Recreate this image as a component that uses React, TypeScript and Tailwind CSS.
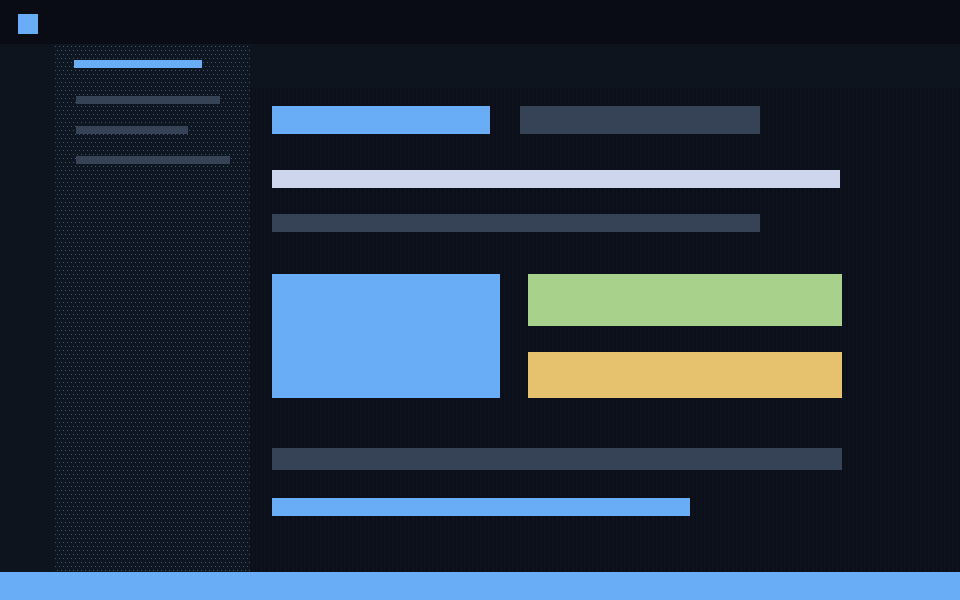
export default function App() {
  return (
    <div className="flex h-[600px] w-[960px] flex-col overflow-hidden bg-[#0b0f19]">
      <header className="h-11 shrink-0 bg-[#090c14] pl-[18px] pt-[14px]">
        <div className="h-5 w-5 bg-[#69adf7]" />
      </header>
      <div className="flex min-h-0 flex-1">
        <div className="w-[54px] shrink-0 bg-[#0d141e]" />
        <aside className="flex w-[196px] shrink-0 flex-col bg-[#0e1622] bg-[radial-gradient(circle_at_1.5px_2.5px,#43546b_0.7px,transparent_0.7px),radial-gradient(circle_at_3.5px_6.5px,#43546b_0.7px,transparent_0.7px)] bg-[length:4px_8px] pl-5 pt-4">
          <div className="h-2 w-[128px] bg-[#69adf7]" />
          <div className="ml-0.5 mt-7 h-2 w-[144px] bg-[#364256]" />
          <div className="ml-0.5 mt-[22px] h-2 w-[112px] bg-[#364256]" />
          <div className="ml-0.5 mt-[22px] h-2 w-[154px] bg-[#364256]" />
        </aside>
        <main className="flex min-w-0 flex-1 flex-col">
          <div className="h-11 shrink-0 bg-[#0d141e]" />
          <div className="flex-1 bg-[repeating-linear-gradient(90deg,#0b0f19_0px,#0b0f19_2px,#0d121d_2px,#0d121d_4px)] pl-[22px] pt-[18px]">
            <div className="flex gap-[30px]">
              <div className="h-7 w-[218px] bg-[#69adf7]" />
              <div className="h-7 w-[240px] bg-[#364256]" />
            </div>
            <div className="mt-9 h-[18px] w-[568px] bg-[#cdd6ec]" />
            <div className="mt-[26px] h-[18px] w-[488px] bg-[#364256]" />
            <div className="mt-[42px] flex gap-7">
              <div className="h-[124px] w-[228px] bg-[#69adf7]" />
              <div className="flex flex-col gap-[26px]">
                <div className="h-[52px] w-[314px] bg-[#a8d28b]" />
                <div className="h-[46px] w-[314px] bg-[#e6c16e]" />
              </div>
            </div>
            <div className="mt-[50px] h-[22px] w-[570px] bg-[#364256]" />
            <div className="mt-7 h-[18px] w-[418px] bg-[#69adf7]" />
          </div>
        </main>
      </div>
      <footer className="h-7 shrink-0 bg-[#69adf7]" />
    </div>
  );
}
